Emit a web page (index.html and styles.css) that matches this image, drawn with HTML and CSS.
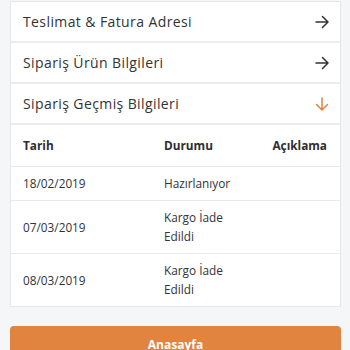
FILE: index.html
```html
<!DOCTYPE html>
<html lang="tr">
<head>
<meta charset="utf-8">
<title>Sipariş</title>
<link rel="stylesheet" href="styles.css">
</head>
<body>
<div class="page">
  <div class="card">
    <div class="row">
      <span>Teslimat &amp; Fatura Adresi</span>
      <svg class="ico" width="14" height="14" viewBox="0 0 14 14"><path d="M1 7H13M7.5 1.5L13 7L7.5 12.5" fill="none" stroke="#333" stroke-width="1.5" stroke-linecap="round" stroke-linejoin="round"/></svg>
    </div>
    <div class="row">
      <span>Sipariş Ürün Bilgileri</span>
      <svg class="ico" width="14" height="14" viewBox="0 0 14 14"><path d="M1 7H13M7.5 1.5L13 7L7.5 12.5" fill="none" stroke="#333" stroke-width="1.5" stroke-linecap="round" stroke-linejoin="round"/></svg>
    </div>
    <div class="row">
      <span>Sipariş Geçmiş Bilgileri</span>
      <svg class="ico" width="14" height="14" viewBox="0 0 14 14"><path d="M7 1V13M1.5 7.5L7 13L12.5 7.5" fill="none" stroke="#e0843f" stroke-width="1.5" stroke-linecap="round" stroke-linejoin="round"/></svg>
    </div>
    <div class="table">
      <div class="tr th">
        <div class="c1">Tarih</div>
        <div class="c2">Durumu</div>
        <div class="c3">Açıklama</div>
      </div>
      <div class="tr">
        <div class="c1">18/02/2019</div>
        <div class="c2">Hazırlanıyor</div>
        <div class="c3"></div>
      </div>
      <div class="tr">
        <div class="c1">07/03/2019</div>
        <div class="c2">Kargo İade Edildi</div>
        <div class="c3"></div>
      </div>
      <div class="tr last">
        <div class="c1">08/03/2019</div>
        <div class="c2">Kargo İade Edildi</div>
        <div class="c3"></div>
      </div>
    </div>
  </div>
  <button class="btn">Anasayfa</button>
</div>
</body>
</html>
```

FILE: styles.css
```css
html, body {
  margin: 0;
  padding: 0;
  background: #f5f6f8;
  font-family: "Open Sans", "Noto Sans", sans-serif;
  color: #333;
}
.page {
  padding: 1px 9px 0 10px;
}
.card {
  background: #fff;
  border: 1px solid #e6e7e9;
}
.row {
  display: flex;
  align-items: center;
  justify-content: space-between;
  height: 39px;
  padding: 0 11px 0 12px;
  border-bottom: 2px solid #ebecee;
  font-size: 14px;
  letter-spacing: 0.4px;
  color: #333;
}
.table {
  font-size: 11.8px;
}
.tr {
  display: grid;
  grid-template-columns: 141px 72px 1fr;
  align-items: center;
  padding: 7px 13px 7px 12px;
  border-bottom: 1px solid #e8e9eb;
  line-height: 19px;
  color: #333;
}
.tr.last {
  border-bottom: none;
}
.th {
  padding: 11px 13px 11px 12px;
  font-weight: 700;
  color: #2e2e2e;
}
.c3 {
  text-align: right;
}
.btn {
  display: block;
  width: 100%;
  margin-top: 19px;
  height: 36px;
  border: none;
  border-radius: 4px;
  background: #e0843f;
  color: #fff;
  font-family: inherit;
  font-size: 12px;
  font-weight: 700;
  padding: 0;
}
```
